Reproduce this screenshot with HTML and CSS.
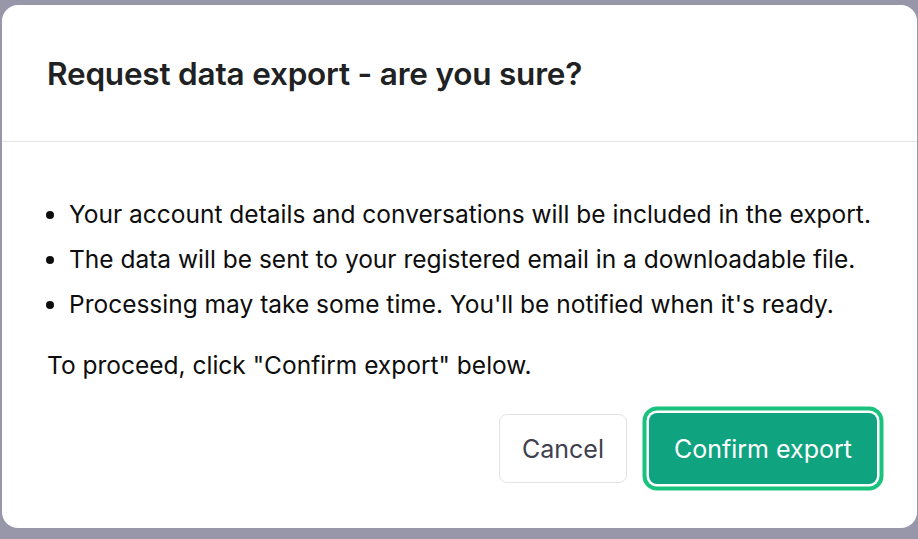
FILE: index.html
```html
<!DOCTYPE html>
<html lang="en">
<head>
<meta charset="utf-8">
<title>Request data export</title>
<link rel="stylesheet" href="styles.css">
</head>
<body>
<div class="backdrop">
  <div class="modal" role="dialog">
    <div class="modal-header">
      <h2 class="modal-title">Request data export - are you sure?</h2>
    </div>
    <div class="modal-body">
      <ul class="info-list">
        <li>Your account details and conversations will be included in the export.</li>
        <li>The data will be sent to your registered email in a downloadable file.</li>
        <li>Processing may take some time. You'll be notified when it's ready.</li>
      </ul>
      <p class="proceed">To proceed, click "Confirm export" below.</p>
      <div class="actions">
        <button class="btn btn-neutral">Cancel</button>
        <button class="btn btn-primary">Confirm export</button>
      </div>
    </div>
  </div>
</div>
</body>
</html>
```
FILE: styles.css
```css
* { box-sizing: border-box; }
html, body { margin: 0; padding: 0; }
body {
  width: 918px;
  height: 539px;
  overflow: hidden;
  background: #9897aa;
  font-family: Inter, "Noto Sans", sans-serif;
}
.backdrop {
  padding: 5px 1px 0 2px;
}
.modal {
  width: 915px;
  height: 523px;
  background: #ffffff;
  border-radius: 16px;
  display: flex;
  flex-direction: column;
}
.modal-header {
  height: 137px;
  border-bottom: 1px solid #e5e5e5;
  display: flex;
  align-items: center;
  padding: 0 45px;
}
.modal-title {
  margin: 0;
  font-size: 31.5px;
  font-weight: 600;
  color: #202123;
  letter-spacing: -0.2px;
}
.modal-body {
  padding: 50px 40px 0 45px;
  color: #0d0d0d;
  font-size: 24.5px;
}
.info-list {
  margin: 0;
  padding: 0 0 0 22px;
  list-style: disc;
  white-space: nowrap;
}
.info-list li {
  line-height: 45px;
}
.proceed {
  margin: 23px 0 0 0;
  line-height: 30px;
}
.actions {
  display: flex;
  justify-content: flex-end;
  align-items: center;
  gap: 22px;
  margin-top: 33px;
}
.btn {
  font-family: inherit;
  font-size: 25px;
  border-radius: 8px;
  cursor: pointer;
}
.btn-neutral {
  width: 128px;
  height: 69px;
  background: #ffffff;
  border: 1px solid #e3e3e3;
  color: #40414f;
}
.btn-primary {
  width: 228px;
  height: 71px;
  background: #10a37f;
  border: none;
  color: #ffffff;
  box-shadow: 0 0 0 2.5px #ffffff, 0 0 0 6.5px #19c37d;
  border-radius: 8px;
}
```
